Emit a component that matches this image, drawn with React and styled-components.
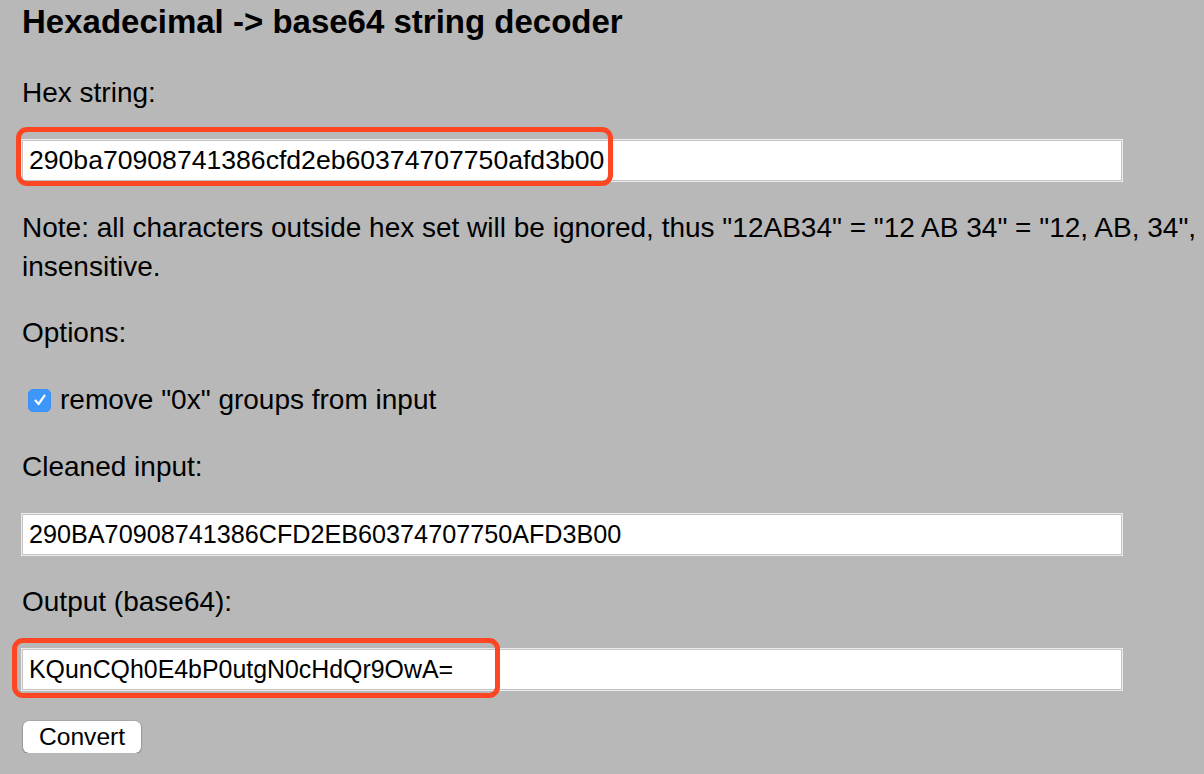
import React, { useState } from "react";
import styled, { createGlobalStyle } from "styled-components";

const GlobalStyle = createGlobalStyle`
  html, body {
    margin: 0;
    padding: 0;
    background: #b8b8b8;
    overflow: hidden;
  }
  body {
    font-family: "Liberation Sans", Arial, Helvetica, sans-serif;
    color: #000;
  }
`;

export default function App() {
  const [hex, setHex] = useState("290ba70908741386cfd2eb60374707750afd3b00");
  const [strip, setStrip] = useState(true);

  const cleaned = hex.replace(strip ? /0x/gi : /$^/, "").replace(/[^0-9a-f]/gi, "").toUpperCase();
  const output = "KQunCQh0E4bP0utgN0cHdQr9OwA=";

  return (
    <>
      <GlobalStyle />
      <Page>
        <Title>Hexadecimal -&gt; base64 string decoder</Title>

        <Label>Hex string:</Label>
        <Field>
          <Input $size={26.6} value={hex} onChange={(e) => setHex(e.target.value)} />
          <Highlight $left={-6} $top={-13} $width={597} $height={59} />
        </Field>

        <Note>
          Note: all characters outside hex set will be ignored, thus "12AB34" = "12 AB 34" = "12, AB, 34", and is case
          <br />
          insensitive.
        </Note>

        <Label>Options:</Label>

        <CheckRow onClick={() => setStrip((v) => !v)}>
          <CheckBox $checked={strip}>
            {strip && (
              <svg width="14" height="14" viewBox="0 0 14 14">
                <path d="M2.5 7.6 L5.6 11 L11.5 2.6" fill="none" stroke="#fff" strokeWidth="2.2" strokeLinecap="round" strokeLinejoin="round" />
              </svg>
            )}
          </CheckBox>
          remove "0x" groups from input
        </CheckRow>

        <Label>Cleaned input:</Label>
        <Field>
          <Input $size={25.2} value={cleaned} readOnly />
        </Field>

        <Label>Output (base64):</Label>
        <Field>
          <Input $size={24.9} value={output} readOnly />
          <Highlight $left={-10} $top={-11} $width={488} $height={60} />
        </Field>

        <Button>Convert</Button>
      </Page>
    </>
  );
}

/* ----------------------------- STYLED COMPONENTS ----------------------------- */

const Page = styled.div`
  display: flex;
  flex-direction: column;
  align-items: flex-start;
  gap: 27px;
  padding: 2px 0 0 22px;
`;

const Title = styled.h1`
  margin: 0 0 4px 0;
  font-size: 33px;
  line-height: 40px;
  font-weight: 700;
`;

const Label = styled.div`
  font-size: 28px;
  line-height: 40px;
`;

const Note = styled.div`
  font-size: 28px;
  line-height: 39px;
  white-space: nowrap;
`;

const Field = styled.div`
  position: relative;
  width: 1100px;
`;

const Input = styled.input`
  display: block;
  box-sizing: border-box;
  width: 100%;
  height: 41px;
  margin: 0;
  padding: 0 6px;
  background: #fff;
  border: 1px solid #c4c4c4;
  box-shadow: 0 0 0 1px #ececec;
  border-radius: 0;
  font-family: "Liberation Sans", Arial, sans-serif;
  font-size: ${(p) => p.$size}px;
  color: #000;
  outline: none;
`;

const Highlight = styled.div`
  position: absolute;
  left: ${(p) => p.$left}px;
  top: ${(p) => p.$top}px;
  width: ${(p) => p.$width}px;
  height: ${(p) => p.$height}px;
  box-sizing: border-box;
  border: 5px solid #ff4623;
  border-radius: 11px;
  pointer-events: none;
`;

const CheckRow = styled.label`
  display: flex;
  align-items: center;
  gap: 9px;
  padding-left: 6px;
  font-size: 28px;
  line-height: 40px;
  cursor: pointer;
  user-select: none;
`;

const CheckBox = styled.span`
  display: flex;
  align-items: center;
  justify-content: center;
  width: 23px;
  height: 23px;
  box-sizing: border-box;
  border-radius: 5px;
  background: ${(p) => (p.$checked ? "#3d97fb" : "#fff")};
  border: 1px solid ${(p) => (p.$checked ? "#3a8ff0" : "#9a9a9a")};
`;

const Button = styled.button`
  margin: 4px 0 0 1px;
  height: 32px;
  padding: 0 16px;
  background: #fff;
  border: none;
  border-radius: 6px;
  box-shadow: 0 1px 2px rgba(0, 0, 0, 0.35), 0 0 0 0.5px rgba(0, 0, 0, 0.15);
  font-family: "Liberation Sans", Arial, sans-serif;
  font-size: 24.6px;
  color: #000;
  cursor: pointer;
`;
